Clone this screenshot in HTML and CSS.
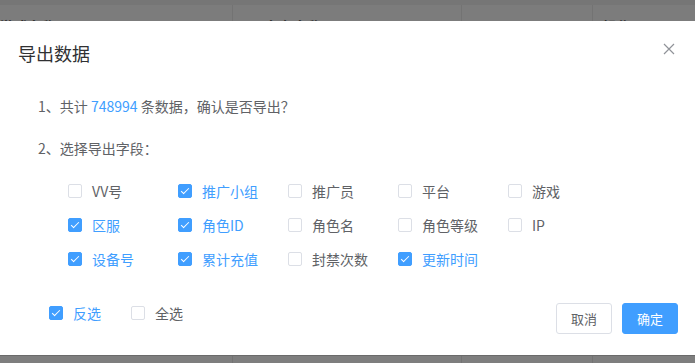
FILE: index.html
```html
<!DOCTYPE html>
<html lang="zh-CN">
<head>
<meta charset="utf-8">
<title>导出数据</title>
<link rel="stylesheet" href="styles.css">
</head>
<body>
<div class="page">
  <div class="topbar"></div>
  <div class="thead">
    <div class="th c1"><span>游戏名称</span></div>
    <div class="th c2"><span>角色名称</span></div>
    <div class="th c3"><span></span></div>
    <div class="th c4"><span>操作</span></div>
  </div>
  <div class="spacer"></div>
  <div class="tfoot">
    <div class="th c1"></div>
    <div class="th c2"></div>
    <div class="th c3"></div>
    <div class="th c4"></div>
  </div>
</div>

<div class="dialog">
  <div class="dlg-header">
    <h2 class="dlg-title">导出数据</h2>
    <button class="dlg-close" aria-label="关闭">
      <svg width="12" height="12" viewBox="0 0 12 12"><path d="M1 1L11 11M11 1L1 11" stroke="#909399" stroke-width="1.2" fill="none"/></svg>
    </button>
  </div>
  <div class="dlg-body">
    <p class="line">1、共计 <span class="num">748994</span> 条数据，确认是否导出？</p>
    <p class="line second">2、选择导出字段：</p>
    <div class="fields">
      <label class="cb"><span class="box"></span><span class="txt">VV号</span></label>
      <label class="cb on"><span class="box"></span><span class="txt">推广小组</span></label>
      <label class="cb"><span class="box"></span><span class="txt">推广员</span></label>
      <label class="cb"><span class="box"></span><span class="txt">平台</span></label>
      <label class="cb"><span class="box"></span><span class="txt">游戏</span></label>

      <label class="cb on"><span class="box"></span><span class="txt">区服</span></label>
      <label class="cb on"><span class="box"></span><span class="txt">角色ID</span></label>
      <label class="cb"><span class="box"></span><span class="txt">角色名</span></label>
      <label class="cb"><span class="box"></span><span class="txt">角色等级</span></label>
      <label class="cb"><span class="box"></span><span class="txt">IP</span></label>

      <label class="cb on"><span class="box"></span><span class="txt">设备号</span></label>
      <label class="cb on"><span class="box"></span><span class="txt">累计充值</span></label>
      <label class="cb"><span class="box"></span><span class="txt">封禁次数</span></label>
      <label class="cb on"><span class="box"></span><span class="txt">更新时间</span></label>
    </div>
  </div>
  <div class="dlg-footer">
    <div class="toggles">
      <label class="cb on"><span class="box"></span><span class="txt">反选</span></label>
      <label class="cb"><span class="box"></span><span class="txt">全选</span></label>
    </div>
    <div class="btns">
      <button class="btn">取消</button>
      <button class="btn primary">确定</button>
    </div>
  </div>
</div>
</body>
</html>
```

FILE: styles.css
```css
* { box-sizing: border-box; }
html, body { margin: 0; padding: 0; }
body {
  width: 695px;
  height: 363px;
  overflow: hidden;
  background: #777777;
  font-family: "Noto Sans CJK SC", "Liberation Sans", sans-serif;
}

.page {
  display: flex;
  flex-direction: column;
  height: 363px;
}
.topbar { height: 5px; background: #767676; }
.thead, .tfoot {
  display: flex;
  background: #7c7c7c;
}
.thead { height: 30px; }
.spacer { flex: 1; }
.tfoot { height: 8px; border-top: 1px solid #6a6a6a; background: #7e7e7e; }
.th {
  border-right: 1px solid #737373;
  font-size: 14px;
  color: #2e2e2e;
  padding: 13px 0 0;
  line-height: 16px;
  font-weight: bold;
}
.c1 { width: 233px; padding-left: 0; }
.c2 { width: 229px; padding-left: 33px; }
.c3 { width: 131px; }
.c4 { flex: 1; border-right: 0; padding-left: 10px; }

.dialog {
  position: fixed;
  top: 21px;
  left: 0;
  right: 0;
  height: 334px;
  background: #ffffff;
  display: flex;
  flex-direction: column;
}

.dlg-header {
  display: flex;
  justify-content: space-between;
  align-items: flex-start;
  padding: 20px 20px 0 18px;
}
.dlg-title {
  margin: 0;
  font-size: 18px;
  line-height: 24px;
  font-weight: normal;
  color: #303133;
}
.dlg-close {
  border: 0;
  background: none;
  padding: 0;
  margin-top: 2px;
  width: 12px;
  height: 12px;
  display: flex;
}

.dlg-body {
  padding: 31px 0 0 38px;
}
.line {
  margin: 0;
  font-size: 14px;
  line-height: 20px;
  color: #606266;
}
.line.second { margin-top: 22px; }
.num { color: #409eff; }

.fields {
  margin: 16px 0 0 30px;
  display: grid;
  grid-template-columns: repeat(5, 110px);
  grid-auto-rows: 34px;
}

.cb {
  display: flex;
  align-items: center;
  font-size: 14px;
  color: #606266;
}
.box {
  width: 14px;
  height: 14px;
  border: 1px solid #dcdfe6;
  border-radius: 2px;
  background: #fff;
  margin-right: 10px;
  position: relative;
  flex: none;
}
.cb.on .box {
  background: #409eff;
  border-color: #409eff;
}
.cb.on .box::after {
  content: "";
  position: absolute;
  left: 4px;
  top: 1px;
  width: 3px;
  height: 7px;
  border: 1px solid #fff;
  border-left: 0;
  border-top: 0;
  transform: rotate(45deg);
}
.cb.on .txt { color: #409eff; }

.dlg-footer {
  margin-top: auto;
  height: 52px;
  display: flex;
  justify-content: space-between;
  align-items: flex-start;
  padding: 0 17px 0 49px;
}
.toggles {
  display: flex;
  gap: 0;
}
.toggles .cb { height: 20px; width: 82px; }
.btns { display: flex; gap: 10px; }
.btn {
  height: 31px;
  padding: 0 14px;
  font-family: "Noto Sans CJK SC", "Liberation Sans", sans-serif;
  font-size: 13px;
  color: #606266;
  background: #fff;
  border: 1px solid #dcdfe6;
  border-radius: 3px;
}
.btn.primary {
  background: #409eff;
  border-color: #409eff;
  color: #fff;
  width: 56px;
}
```
